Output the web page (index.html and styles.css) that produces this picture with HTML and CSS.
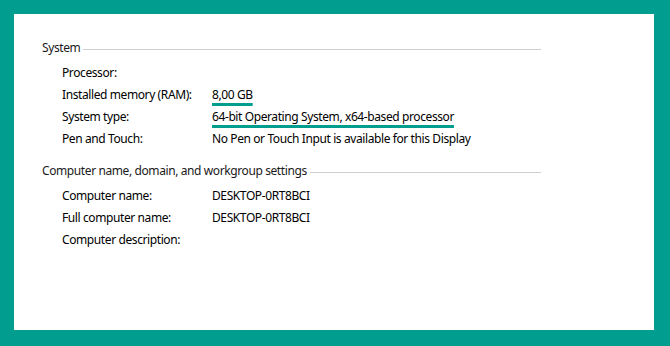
FILE: index.html
```html
<!DOCTYPE html>
<html lang="en">
<head>
<meta charset="UTF-8" />
<title>System</title>
<link rel="stylesheet" href="styles.css">
</head>
<body>
  <!-- Panneau blanc -->
  <div class="panel">

    <!-- Section systeme -->
    <div class="section">
      <div class="section-title"><span>System</span></div>
      <div class="row"><span class="label">Processor:</span><span class="value"></span></div>
      <div class="row"><span class="label">Installed memory (RAM):</span><span class="value"><span class="mark">8,00 GB</span></span></div>
      <div class="row"><span class="label">System type:</span><span class="value"><span class="mark">64-bit Operating System, x64-based processor</span></span></div>
      <div class="row"><span class="label">Pen and Touch:</span><span class="value">No Pen or Touch Input is available for this Display</span></div>
    </div>

    <!-- Section nom ordinateur -->
    <div class="section">
      <div class="section-title"><span>Computer name, domain, and workgroup settings</span></div>
      <div class="row"><span class="label">Computer name:</span><span class="value">DESKTOP-0RT8BCI</span></div>
      <div class="row"><span class="label">Full computer name:</span><span class="value">DESKTOP-0RT8BCI</span></div>
      <div class="row"><span class="label">Computer description:</span><span class="value"></span></div>
    </div>

  </div>
</body>
</html>
```

FILE: styles.css
```css
/* ========== Global ========== */
html, body {
  margin: 0;
  height: 100%;
}
body {
  background: #019d8f;
  padding: 14px 16px 16px 14px;
  box-sizing: border-box;
  font-family: "Noto Sans", "Open Sans", sans-serif;
  font-size: 12px;
  letter-spacing: -0.4px;
  color: #000;
}
/* Panneau */
.panel {
  background: #fff;
  height: 100%;
  padding: 23px 0 0 28px;
  box-sizing: border-box;
}
.section {
  width: 499px;
  margin-bottom: 10px;
}
/* Titre de section avec trait */
.section-title {
  display: flex;
  align-items: flex-start;
  height: 25px;
  line-height: 22px;
}
.section-title span {
  white-space: nowrap;
  color: #1a1a1a;
}
.section-title::after {
  content: "";
  flex: 1;
  height: 1px;
  background: #cfcfcf;
  margin: 12px 0 0 3px;
}
/* Lignes */
.row {
  display: flex;
  height: 22px;
  line-height: 22px;
  padding-left: 20px;
  white-space: nowrap;
}
.label {
  width: 150px;
  flex-shrink: 0;
}
.mark {
  text-decoration: underline;
  text-decoration-color: #019d8f;
  text-decoration-thickness: 3px;
  text-underline-offset: 4px;
  text-decoration-skip-ink: none;
}
```
